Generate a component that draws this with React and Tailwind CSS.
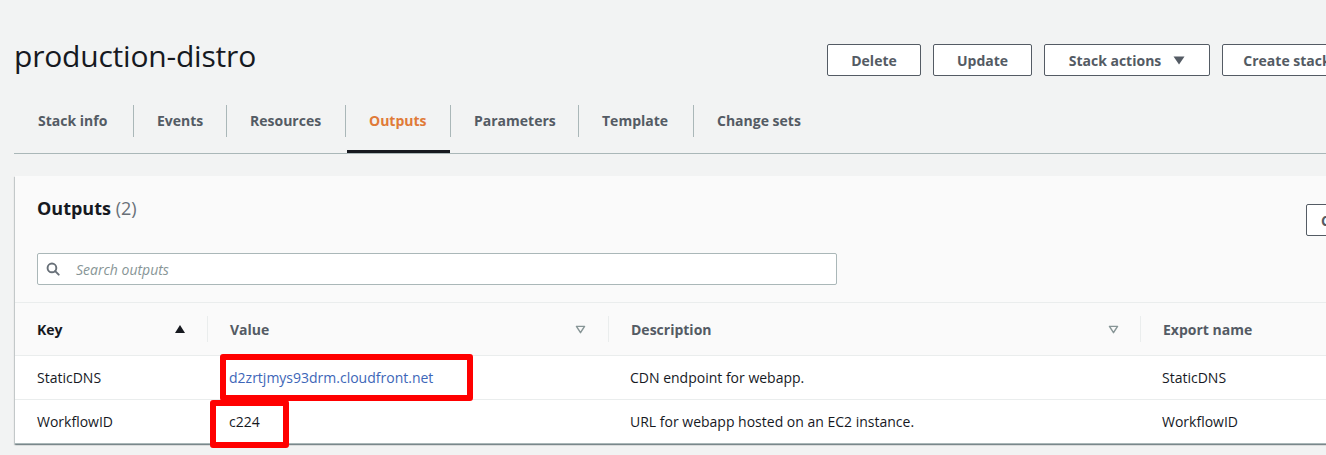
import React from "react";

const tabs = [
  { label: "Stack info", w: "w-[119px]", first: true },
  { label: "Events", w: "w-[93px]" },
  { label: "Resources", w: "w-[119px]" },
  { label: "Outputs", w: "w-[105px]", active: true },
  { label: "Parameters", w: "w-[128px]" },
  { label: "Template", w: "w-[115px]" },
  { label: "Change sets", w: "w-[130px]" },
];

function SearchIcon() {
  return (
    <svg width="14" height="14" viewBox="0 0 16 16" fill="none" stroke="#687078" strokeWidth="2.2" strokeLinecap="round">
      <circle cx="6.8" cy="6.8" r="5" />
      <path d="M10.5 10.5 L14.5 14.5" />
    </svg>
  );
}

function CaretUp() {
  return (
    <svg width="12" height="10" viewBox="0 0 12 10">
      <path d="M6 1 L11 9 L1 9 Z" fill="#16191f" />
    </svg>
  );
}

function CaretDownOutline() {
  return (
    <svg width="11" height="9" viewBox="0 0 12 10">
      <path d="M1.5 1.5 L10.5 1.5 L6 8.5 Z" fill="none" stroke="#879596" strokeWidth="1.6" strokeLinejoin="round" />
    </svg>
  );
}

function Btn({ children, w }) {
  return (
    <div className={`${w} h-[32px] shrink-0 flex items-center justify-center border border-[#545b64] rounded-[2px] bg-white text-[14px] font-bold text-[#545b64]`}>
      {children}
    </div>
  );
}

export default function App() {
  return (
    <div className="relative w-[1326px] h-[455px] overflow-hidden bg-[#f2f3f3] font-['Open_Sans',sans-serif] text-[#16191f]">
      <div className="w-[1400px] pl-[14px]">
        {/* Header */}
        <div className="flex items-center justify-between w-[1338px] h-[32px] mt-[44px]">
          <h1 className="text-[30px] leading-[32px] font-normal text-[#16191f] -mt-[9px] tracking-[-0.2px]">production-distro</h1>
          <div className="flex gap-[12px]">
            <Btn w="w-[94px]">Delete</Btn>
            <Btn w="w-[99px]">Update</Btn>
            <Btn w="w-[166px]">
              <span>Stack actions</span>
              <svg width="12" height="9" viewBox="0 0 12 9" className="ml-[12px]">
                <path d="M0.5 0.5 L11.5 0.5 L6 8.5 Z" fill="#545b64" />
              </svg>
            </Btn>
            <Btn w="w-[130px]">Create stack</Btn>
          </div>
        </div>

        {/* Tabs */}
        <div className="mt-[29px] flex border-b border-[#aab7b8] h-[49px]">
          {tabs.map((t) => (
            <div key={t.label} className={`${t.w} relative shrink-0 h-[48px]`}>
              <div
                className={`h-[32px] pb-[2px] flex items-center text-[14px] font-bold ${t.first ? "pl-[24px]" : "border-l border-[#aab7b8] pl-[23px]"} ${t.active ? "text-[#e07a38]" : "text-[#545b64]"}`}
              >
                {t.label}
              </div>
              {t.active && <div className="absolute left-[2px] right-0 bottom-0 h-[3px] bg-[#16191f]" />}
            </div>
          ))}
        </div>

        {/* Card */}
        <div className="mt-[22px] ml-[1px] bg-[#fafafa] shadow-[0_1px_1px_0_rgba(0,28,36,0.3),1px_1px_1px_0_rgba(0,28,36,0.15),-1px_1px_1px_0_rgba(0,28,36,0.15)]">
          <div className="pl-[22px] pt-[20px] pb-[17px] border-b border-[#eaeded]">
            <div className="flex items-start h-[32px]">
              <div className="w-[1269px] shrink-0 text-[18px] leading-[24px] font-bold">
                Outputs <span className="font-normal text-[#687078]">(2)</span>
              </div>
              <div className="mt-[8px] w-[80px] h-[32px] shrink-0 border border-[#545b64] rounded-[2px] bg-white text-[14px] font-bold text-[#545b64] flex items-center pl-[14px]">
                Copy
              </div>
            </div>
            <div className="mt-[25px] w-[800px] h-[32px] bg-white border border-[#aab7b8] rounded-[2px] flex items-center pl-[8px]">
              <SearchIcon />
              <span className="ml-[16px] text-[14px] italic text-[#879596]">Search outputs</span>
            </div>
          </div>

          {/* Table */}
          <div className="text-[14px]">
            <div className="flex h-[53px] items-center bg-[#fafafa] border-b border-[#eaeded] font-bold text-[#545b64]">
              <div className="w-[192px] shrink-0 flex items-center pl-[22px] pr-[21px] justify-between">
                <span className="text-[#16191f]">Key</span>
                <CaretUp />
              </div>
              <div className="w-[401px] shrink-0 flex items-center h-[26px] border-l border-[#eaeded] pl-[22px] pr-[22px] justify-between">
                <span>Value</span>
                <CaretDownOutline />
              </div>
              <div className="w-[532px] shrink-0 flex items-center h-[26px] border-l border-[#eaeded] pl-[22px] pr-[21px] justify-between">
                <span>Description</span>
                <CaretDownOutline />
              </div>
              <div className="w-[200px] shrink-0 flex items-center h-[26px] border-l border-[#eaeded] pl-[22px]">
                <span>Export name</span>
              </div>
            </div>
            <div className="flex h-[44px] items-center bg-white border-b border-[#eaeded]">
              <div className="w-[192px] shrink-0 pl-[22px]">StaticDNS</div>
              <div className="w-[401px] shrink-0 pl-[22px] text-[#3d66b8]">d2zrtjmys93drm.cloudfront.net</div>
              <div className="w-[532px] shrink-0 pl-[22px]">CDN endpoint for webapp.</div>
              <div className="w-[200px] shrink-0 pl-[22px]">StaticDNS</div>
            </div>
            <div className="flex h-[44px] items-center bg-white border-b border-[#aab7b8]">
              <div className="w-[192px] shrink-0 pl-[22px]">WorkflowID</div>
              <div className="w-[401px] shrink-0 pl-[22px]">c224</div>
              <div className="w-[532px] shrink-0 pl-[22px]">URL for webapp hosted on an EC2 instance.</div>
              <div className="w-[200px] shrink-0 pl-[22px]">WorkflowID</div>
            </div>
          </div>
        </div>
      </div>

      {/* Red annotation boxes */}
      <div className="absolute left-[220px] top-[354px] w-[253px] h-[47px] border-[6px] border-[#ff0000] rounded-[3px]" />
      <div className="absolute left-[210px] top-[400px] w-[79px] h-[48px] border-[6px] border-[#ff0000] rounded-[3px]" />
    </div>
  );
}
